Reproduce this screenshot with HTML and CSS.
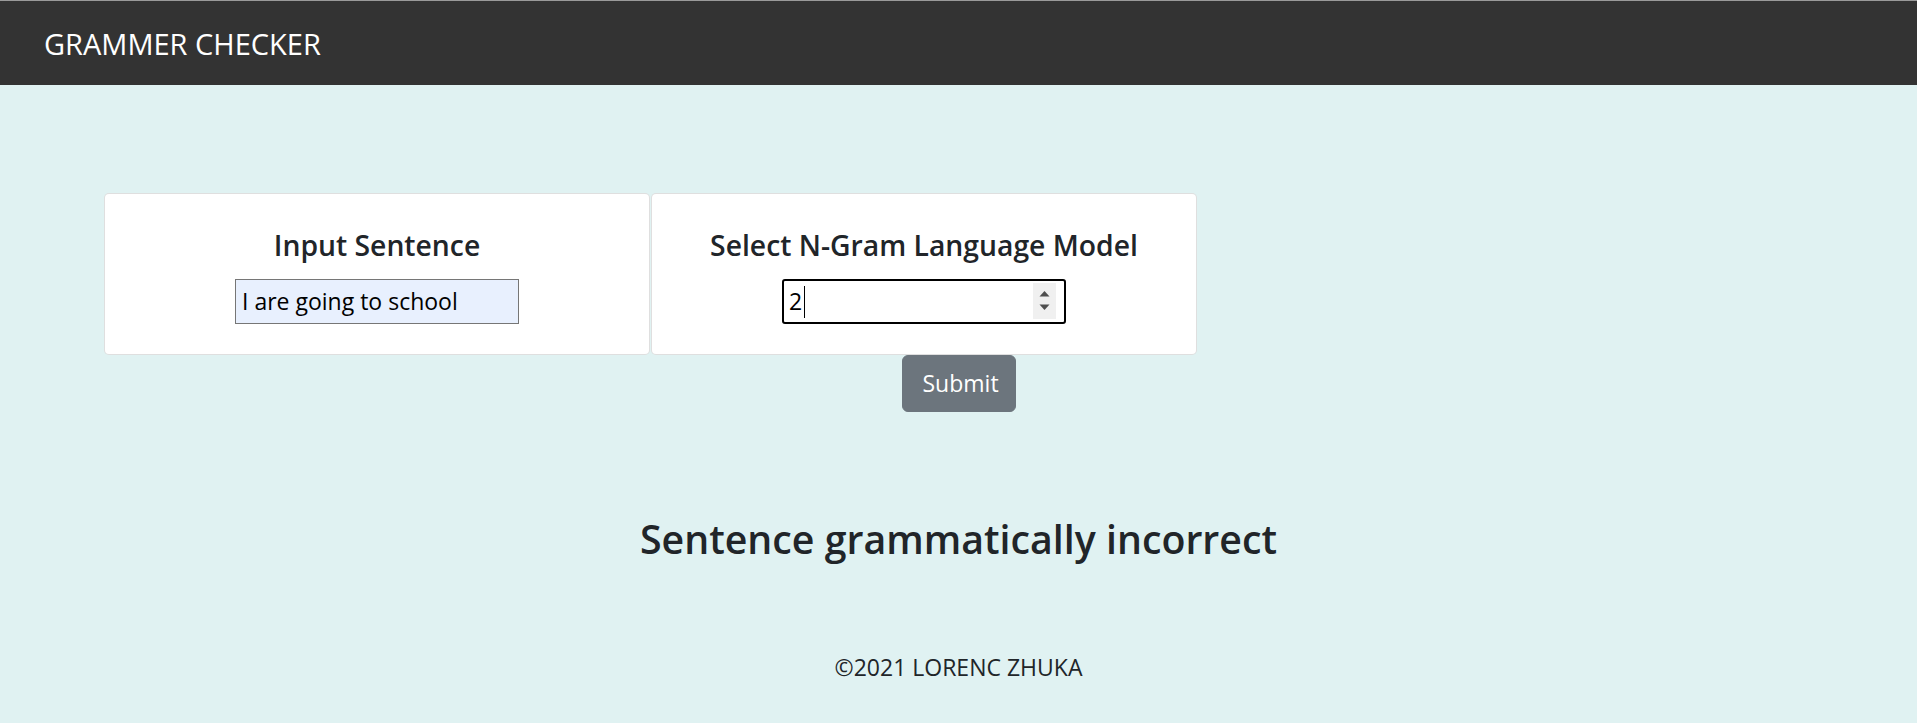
FILE: index.html
```html
<!DOCTYPE html>
<html lang="en">
<head>
<meta charset="utf-8">
<title>Grammer Checker</title>
<link rel="stylesheet" href="styles.css">
</head>
<body>
<nav class="navbar"><span class="brand">GRAMMER CHECKER</span></nav>
<main class="main">
  <div class="cards">
    <div class="card">
      <h4 class="card-title">Input Sentence</h4>
      <div class="text-input">I are going to school</div>
    </div>
    <div class="card">
      <h4 class="card-title">Select N-Gram Language Model</h4>
      <div class="num-input">
        <span class="num-value">2</span><span class="caret"></span>
        <span class="spinner">
          <svg width="23" height="35" viewBox="0 0 23 35"><path d="M6.5 13.5 L11.5 8 L16.5 13.5 Z" fill="#4f4f4f"/><path d="M6.5 21.5 L11.5 27 L16.5 21.5 Z" fill="#4f4f4f"/></svg>
        </span>
      </div>
    </div>
  </div>
  <div class="submit-row"><button class="btn" type="button">Submit</button></div>
  <h2 class="result">Sentence grammatically incorrect</h2>
</main>
<footer class="footer">©2021 LORENC ZHUKA</footer>
</body>
</html>
```
FILE: styles.css
```css
html, body {
  margin: 0;
  padding: 0;
}
body {
  background: #e0f2f2;
  font-family: "Open Sans", "Noto Sans", sans-serif;
  color: #212529;
  height: 723px;
  overflow: hidden;
}
.navbar {
  background: #333333;
  border-top: 1px solid #9a9a9a;
  height: 85px;
  box-sizing: border-box;
  display: flex;
  align-items: center;
  padding-left: 44px;
}
.brand {
  color: #ffffff;
  font-size: 29px;
  line-height: 1;
}
.main {
  display: flex;
  flex-direction: column;
}
.cards {
  display: flex;
  gap: 1px;
  margin: 108px 0 0 104px;
}
.card {
  width: 546px;
  height: 162px;
  box-sizing: border-box;
  background: #ffffff;
  border: 1px solid rgba(0, 0, 0, 0.125);
  border-radius: 5px;
  display: flex;
  flex-direction: column;
  align-items: center;
  padding-top: 33px;
}
.card-title {
  margin: 0 0 16px;
  font-size: 28.3px;
  font-weight: 600;
  line-height: 36px;
}
.text-input {
  width: 284px;
  height: 45px;
  box-sizing: border-box;
  background: #e8f0fe;
  border: 1px solid #767676;
  font-size: 23px;
  line-height: 43px;
  padding-left: 6px;
  color: #000;
}
.num-input {
  width: 284px;
  height: 45px;
  box-sizing: border-box;
  border: 2px solid #000;
  border-radius: 3px;
  background: #fff;
  display: flex;
  align-items: center;
  padding-left: 5px;
  font-size: 23px;
  color: #000;
  position: relative;
}
.num-value {
  line-height: 1;
}
.caret {
  display: inline-block;
  width: 1px;
  height: 32px;
  background: #000;
  margin-left: 2px;
}
.spinner {
  position: absolute;
  right: 8px;
  top: 2px;
  width: 23px;
  height: 36px;
  background: #f0f0f0;
  display: flex;
}
.submit-row {
  display: flex;
  justify-content: center;
}
.btn {
  background: #6c757d;
  color: #ffffff;
  border: 1px solid #6c757d;
  border-radius: 6px;
  font-family: inherit;
  font-size: 23px;
  line-height: 35px;
  padding: 10px 20px;
  height: 57px;
  width: 114px;
}
.result {
  text-align: center;
  margin: 103px 0 0;
  font-size: 39.3px;
  font-weight: 600;
  line-height: 48px;
}
.footer {
  text-align: center;
  font-size: 23px;
  line-height: 28px;
  margin-top: 90px;
}
```
